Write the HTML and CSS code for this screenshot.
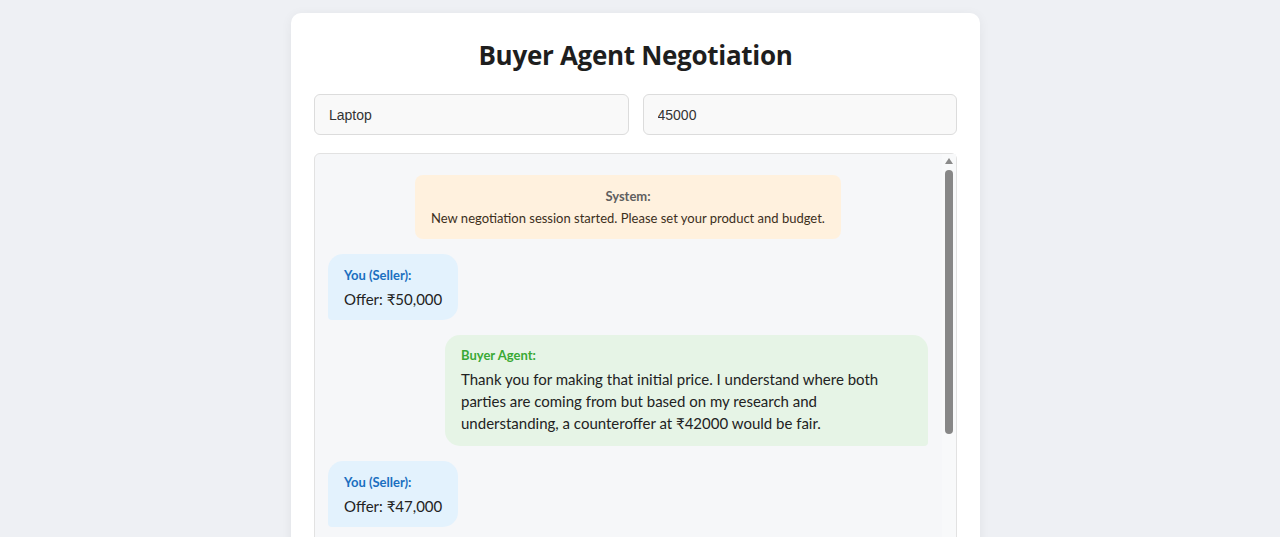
FILE: index.html
```html
<!DOCTYPE html>
<html lang="en">
<head>
<meta charset="utf-8">
<title>Buyer Agent Negotiation</title>
<link rel="stylesheet" href="styles.css">
</head>
<body>
<div class="card">
  <h1 class="title">Buyer Agent Negotiation</h1>
  <div class="inputs">
    <input class="field" type="text" value="Laptop">
    <input class="field" type="text" value="45000">
  </div>
  <div class="chat">
    <div class="messages">
      <div class="msg system">
        <div class="label">System:</div>
        <div class="text">New negotiation session started. Please set your product and budget.</div>
      </div>
      <div class="msg seller">
        <div class="label">You (Seller):</div>
        <div class="text">Offer: ₹50,000</div>
      </div>
      <div class="msg buyer">
        <div class="label">Buyer Agent:</div>
        <div class="text">Thank you for making that initial price. I understand where both parties are coming from but based on my research and understanding, a counteroffer at ₹42000 would be fair.</div>
      </div>
      <div class="msg seller">
        <div class="label">You (Seller):</div>
        <div class="text">Offer: ₹47,000</div>
      </div>
    </div>
    <div class="scrollbar">
      <div class="arrow"></div>
      <div class="thumb"></div>
    </div>
  </div>
</div>
</body>
</html>
```

FILE: styles.css
```css
html, body {
  margin: 0;
  padding: 0;
}
body {
  background: #eef0f4;
  font-family: "Lato", "Open Sans", sans-serif;
  color: #222;
  height: 537px;
  overflow: hidden;
}
.card {
  width: 643px;
  margin: 13px 0 0 291px;
  padding: 23px 23px 30px;
  background: #fff;
  border-radius: 10px;
  box-shadow: 0 2px 12px rgba(0, 0, 0, 0.06);
}
.title {
  margin: 1px 0 21px;
  text-align: center;
  font-family: "Open Sans", sans-serif;
  font-size: 26px;
  line-height: 36px;
  font-weight: 700;
  color: #1e1e1e;
  letter-spacing: -0.3px;
}
.inputs {
  display: flex;
  gap: 14px;
  margin-bottom: 18px;
}
.field {
  flex: 1;
  min-width: 0;
  box-sizing: border-box;
  height: 41px;
  padding: 0 14px;
  border: 1px solid #dcdcdc;
  border-radius: 6px;
  background: #f9f9f9;
  font-family: "Liberation Sans", sans-serif;
  font-size: 14px;
  color: #333;
  outline: none;
}
.chat {
  box-sizing: border-box;
  height: 420px;
  border: 1px solid #e2e2e2;
  border-radius: 6px;
  background: #f6f7f9;
  display: flex;
}
.messages {
  flex: 1;
  min-width: 0;
  padding: 21px 14px 14px 13px;
  display: flex;
  flex-direction: column;
  gap: 15px;
  overflow: hidden;
}
.scrollbar {
  flex: 0 0 14px;
  display: flex;
  flex-direction: column;
  align-items: center;
  padding-top: 4px;
  box-sizing: border-box;
  background: #f8f9fa;
}
.arrow {
  width: 0;
  height: 0;
  border-left: 4px solid transparent;
  border-right: 4px solid transparent;
  border-bottom: 6px solid #8a8a8a;
  margin-bottom: 6px;
}
.thumb {
  width: 8px;
  height: 264px;
  background: #878787;
  border-radius: 4px;
}
.msg {
  max-width: 80.5%;
  box-sizing: border-box;
}
.label {
  font-size: 13px;
  font-weight: 700;
  line-height: 16px;
  margin-bottom: 5px;
}
.text {
  font-size: 15px;
  line-height: 22px;
}
.system {
  align-self: center;
  background: #fff1de;
  border-radius: 8px;
  padding: 13px 16px 12px;
  text-align: center;
}
.system .label {
  color: #5f5f5f;
  margin-bottom: 5px;
}
.system .text {
  font-size: 13px;
  line-height: 18px;
  color: #3c2f1c;
}
.seller {
  align-self: flex-start;
  background: #e3f2fd;
  border-radius: 15px 15px 15px 4px;
  padding: 13px 16px 10px;
}
.seller .label {
  color: #1a6fc0;
}
.buyer {
  align-self: flex-end;
  background: #e6f4e6;
  border-radius: 15px 15px 4px 15px;
  padding: 12px 16px 12px;
}
.buyer .label {
  color: #3aa935;
}
```
